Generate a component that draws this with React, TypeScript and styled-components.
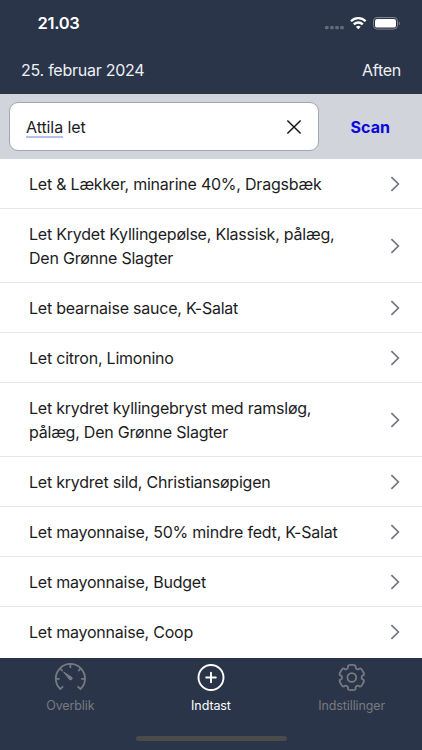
import React from "react";
import styled, { createGlobalStyle } from "styled-components";

const Global = createGlobalStyle`
  * { box-sizing: border-box; }
  body { margin: 0; background: #fff; }
  button { font: inherit; border: 0; background: none; padding: 0; margin: 0; letter-spacing: inherit; }
`;

const Screen = styled.div`
  width: 422px;
  height: 750px;
  display: flex;
  flex-direction: column;
  overflow: hidden;
  font-family: Inter, "Liberation Sans", sans-serif;
  font-size: 16px;
  color: #1c1c1e;
  background: #fff;
`;

const Header = styled.header`
  height: 94px;
  flex: none;
  background: #2a3549;
  color: #eef0f4;
`;

const StatusBar = styled.div`
  height: 46px;
  display: flex;
  align-items: center;
  justify-content: space-between;
  padding: 0 22px 0 37.5px;
`;

const Clock = styled.span`
  font-size: 16.5px;
  font-weight: 600;
  letter-spacing: -0.3px;
  color: #fff;
`;

const StatusIcons = styled.svg`
  display: block;
`;

const TitleBar = styled.div`
  height: 48px;
  display: flex;
  align-items: center;
  justify-content: space-between;
  padding: 0 21px;
  letter-spacing: -0.25px;
`;

const SearchBar = styled.div`
  height: 65px;
  flex: none;
  display: flex;
  padding: 8px 0 8px 8.5px;
  background: #d1d4db;
`;

const SearchField = styled.div`
  width: 310px;
  height: 49px;
  display: flex;
  align-items: center;
  justify-content: space-between;
  padding: 0 15.5px 0 16.5px;
  border: 1px solid #a3a7b0;
  border-radius: 9px;
  background: #fff;
`;

const Query = styled.span`
  letter-spacing: -0.08px;
`;

const Marked = styled.span`
  display: inline-block;
  line-height: 18px;
  box-shadow: 0 2px 0 #b9c0ee;
`;

const IconButton = styled.button`
  display: flex;
`;

const ScanButton = styled.button`
  flex: 1;
  && {
    font-weight: 700;
    color: #0b08dc;
  }
`;

const List = styled.ul`
  list-style: none;
  margin: 0;
  padding: 0;
  height: 499px;
  flex: none;
  letter-spacing: -0.225px;
`;

const Row = styled.li`
  display: flex;
  align-items: center;
  justify-content: space-between;
  padding: 13px 20px 12px 29px;
  line-height: 24px;
  border-bottom: 1px solid #e5e6e9;
  &:last-child { border-bottom: 0; }
`;

const Line = styled.span`
  display: block;
  white-space: nowrap;
`;

const TabBar = styled.nav`
  flex: 1;
  display: grid;
  grid-template-columns: repeat(3, 1fr);
  grid-template-rows: 56px 1fr;
  background: #2a3549;
`;

const Tab = styled.button<{ $active?: boolean }>`
  display: flex;
  flex-direction: column;
  align-items: center;
  && {
    padding-top: 3px;
    font-size: 12.5px;
    color: ${(p) => (p.$active ? "#fff" : "#777a80")};
  }
`;

const TabLabel = styled.span`
  margin-top: 5px;
  line-height: 16px;
  letter-spacing: -0.1px;
`;

const HomeIndicator = styled.div`
  grid-column: 1 / -1;
  justify-self: center;
  margin-top: 22px;
  width: 151px;
  height: 5px;
  border-radius: 3px;
  background: #4b4b4b;
`;

const products: string[][] = [
  ["Let & Lækker, minarine 40%, Dragsbæk"],
  ["Let Krydet Kyllingepølse, Klassisk, pålæg,", "Den Grønne Slagter"],
  ["Let bearnaise sauce, K-Salat"],
  ["Let citron, Limonino"],
  ["Let krydret kyllingebryst med ramsløg,", "pålæg, Den Grønne Slagter"],
  ["Let krydret sild, Christiansøpigen"],
  ["Let mayonnaise, 50% mindre fedt, K-Salat"],
  ["Let mayonnaise, Budget"],
  ["Let mayonnaise, Coop"],
];

const Status = () => (
  <StatusIcons width="76" height="14" viewBox="324 16 76 14" fill="none">
    <g fill="#646c7b">
      <rect x="325" y="26" width="3.6" height="3.2" rx="1" />
      <rect x="330.2" y="26" width="3.6" height="3.2" rx="1" />
      <rect x="335.2" y="26" width="3.6" height="3.2" rx="1" />
      <rect x="340.2" y="26" width="3.6" height="3.2" rx="1" />
    </g>
    <g stroke="#fff" strokeWidth="2.3">
      <path d="M351 21.3a10.2 10.2 0 0 1 14.6 0" />
      <path d="M353.8 24.4a6.3 6.3 0 0 1 9 0" />
    </g>
    <path d="M358.3 29.2l-2.4-2.5a3.6 3.6 0 0 1 4.8 0z" fill="#fff" />
    <rect x="373.5" y="17.5" width="24" height="11.6" rx="3.6" stroke="#7d8492" />
    <rect x="375" y="19" width="21" height="8.6" rx="2.2" fill="#fff" />
    <path d="M398.8 21.6v3.8c1.4-.5 1.4-3.3 0-3.8z" fill="#7d8492" />
  </StatusIcons>
);

const Chevron = () => (
  <svg width="14" height="18" viewBox="0 0 14 18" fill="none" stroke="#737680" strokeWidth="1.7">
    <path d="M3.4 2.1L10.4 9l-7 6.9" />
  </svg>
);

const Gauge = () => (
  <svg width="32" height="32" viewBox="0 0 32 32" fill="none" stroke="currentColor" strokeWidth="1.8" strokeLinecap="round" strokeLinejoin="round">
    <path d="M8.6 25.8L6.3 28.1A14.6 14.6 0 1 1 26.5 28.1L24.2 25.8" />
    <path d="M16.4 3.4v2.9M2 17.9h2.9M27.9 17.9h2.9M6.200 7.600l1.800 1.900M26.600 7.600l-1.800 1.900" />
    <path d="M9.900 11.200L18 16.500a1.600 1.600 0 0 1-2.200 2.200z" fill="currentColor" strokeWidth="1" />
  </svg>
);

const Plus = () => (
  <svg width="32" height="32" viewBox="0 0 32 32" fill="none" stroke="currentColor" strokeWidth="1.9" strokeLinecap="round">
    <circle cx="16" cy="16.5" r="12.5" />
    <path d="M16 11.7v9.6M11.2 16.5h9.6" />
  </svg>
);

// Six-toothed gear outline with every corner rounded by a quadratic curve.
const gearOutline = (cx: number, cy: number, outer: number, inner: number) => {
  const corners: [number, number][] = [];
  for (let tooth = 0; tooth < 6; tooth++) {
    for (const [offset, radius] of [[-22, inner], [-17, outer], [17, outer], [22, inner]]) {
      const a = ((tooth * 60 + offset - 90) * Math.PI) / 180;
      corners.push([cx + radius * Math.cos(a), cy + radius * Math.sin(a)]);
    }
  }
  const toward = (a: [number, number], b: [number, number]) =>
    `${(a[0] + (b[0] - a[0]) * 0.38).toFixed(2)} ${(a[1] + (b[1] - a[1]) * 0.38).toFixed(2)}`;
  return (
    corners
      .map((c, i) => {
        const prev = corners[(i + corners.length - 1) % corners.length];
        const next = corners[(i + 1) % corners.length];
        return `${i ? "L" : "M"}${toward(c, prev)}Q${c[0].toFixed(2)} ${c[1].toFixed(2)} ${toward(c, next)}`;
      })
      .join("") + "Z"
  );
};

const Gear = () => (
  <svg width="32" height="32" viewBox="0 0 32 32" fill="none" stroke="currentColor" strokeWidth="1.8" strokeLinejoin="round">
    <circle cx="15.8" cy="16.5" r="4.4" />
    <path d={gearOutline(15.8, 16.5, 13.2, 9.9)} />
  </svg>
);

export default function App() {
  return (
    <Screen>
      <Global />
      <Header>
        <StatusBar>
          <Clock>21.03</Clock>
          <Status />
        </StatusBar>
        <TitleBar>
          <span>25. februar 2024</span>
          <span>Aften</span>
        </TitleBar>
      </Header>
      <SearchBar>
        <SearchField>
          <Query>
            <Marked>Attila</Marked> let
          </Query>
          <IconButton aria-label="Ryd">
            <svg width="16" height="16" viewBox="0 0 16 16" stroke="#111" strokeWidth="1.4">
              <path d="M1.4 1.4l13.2 13.2M14.6 1.4L1.4 14.6" />
            </svg>
          </IconButton>
        </SearchField>
        <ScanButton>Scan</ScanButton>
      </SearchBar>
      <List>
        {products.map((lines) => (
          <Row key={lines[0]}>
            <div>
              {lines.map((line) => (
                <Line key={line}>{line}</Line>
              ))}
            </div>
            <Chevron />
          </Row>
        ))}
      </List>
      <TabBar>
        <Tab><Gauge /><TabLabel>Overblik</TabLabel></Tab>
        <Tab $active><Plus /><TabLabel>Indtast</TabLabel></Tab>
        <Tab><Gear /><TabLabel>Indstillinger</TabLabel></Tab>
        <HomeIndicator />
      </TabBar>
    </Screen>
  );
}
